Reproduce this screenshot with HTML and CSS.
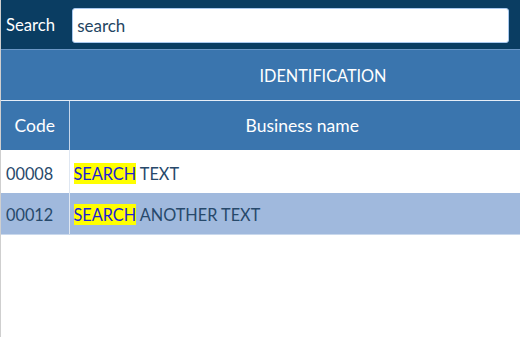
FILE: index.html
```html
<!DOCTYPE html>
<html lang="en">
<head>
  <meta charset="UTF-8">
  <meta name="viewport" content="width=device-width, initial-scale=1.0">
  <title>Search</title>
  <link rel="stylesheet" href="styles.css">
</head>
<body>
  <div class="page">
    <header class="searchbar">
      <label for="q">Search</label>
      <input type="text" id="q" value="search">
    </header>

    <div class="viewport">
      <table class="grid">
        <colgroup>
          <col class="col-code">
          <col class="col-name">
        </colgroup>
        <thead>
          <tr class="group">
            <th colspan="2"><span>IDENTIFICATION</span></th>
          </tr>
          <tr class="cols">
            <th>Code</th>
            <th class="name">Business name</th>
          </tr>
        </thead>
        <tbody>
          <tr>
            <td>00008</td>
            <td><mark>SEARCH</mark> TEXT</td>
          </tr>
          <tr class="selected">
            <td>00012</td>
            <td><mark>SEARCH</mark> ANOTHER TEXT</td>
          </tr>
        </tbody>
      </table>
    </div>
  </div>
</body>
</html>
```

FILE: styles.css
```css
html, body {
  margin: 0;
  height: 100%;
  overflow: hidden;
}
body {
  font-family: Lato, "Open Sans", sans-serif;
  background: #fff;
}
.page {
  height: 100%;
  border-left: 1px solid #cfcfcf;
}
.searchbar {
  background: #0a3d62;
  height: 49px;
  display: flex;
  align-items: center;
  gap: 17px;
  padding: 0 11px 0 5px;
  border-bottom: 1px solid #6a97c6;
}
.searchbar label {
  color: #fff;
  font-size: 16.7px;
}
.searchbar input {
  flex: 1;
  min-width: 0;
  height: 35px;
  box-sizing: border-box;
  border: 1px solid #a8c8ee;
  border-radius: 3px;
  padding: 0 4px;
  font-family: inherit;
  font-size: 17px;
  color: #234562;
  outline: none;
  margin-top: 1px;
}
.viewport {
  overflow: hidden;
}
.grid {
  border-collapse: collapse;
  width: 534px;
  table-layout: fixed;
}
.col-code {
  width: 68px;
}
.grid th {
  background: #3a75ae;
  color: #fff;
  font-weight: normal;
  font-size: 17.5px;
  height: 49px;
  padding: 0;
}
.grid .group th {
  border-bottom: 1px solid #e6eef8;
  height: 50px;
}
.grid .group span {
  display: inline-block;
  padding-left: 110px;
  font-size: 16.3px;
}
.grid .cols th + th {
  border-left: 1px solid #c6d6ea;
}
.grid td {
  height: 43px;
  padding: 3px 5px 0;
  box-sizing: border-box;
  font-size: 16.3px;
  color: #27496b;
}
.grid td + td {
  border-left: 1px solid #dfe7f2;
  padding-left: 4px;
}
.grid tr.selected td {
  background: #a0b9dd;
  height: 41px;
  border-bottom: 1px solid #c9d8ec;
}
mark {
  background: #ffff00;
  color: #1e22d6;
  padding: 1px 0;
}
```
